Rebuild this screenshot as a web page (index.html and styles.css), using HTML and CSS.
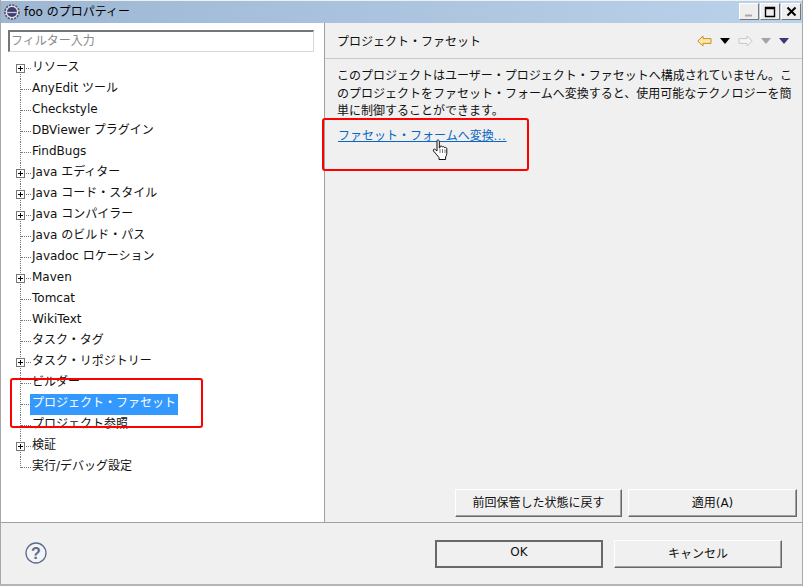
FILE: index.html
```html
<!DOCTYPE html>
<html lang="ja">
<head>
<meta charset="utf-8">
<title>foo のプロパティー</title>
<link rel="stylesheet" href="styles.css">
</head>
<body>
<div class="window">
  <header class="titlebar">
    <svg class="app-icon" width="16" height="16" viewBox="0 0 16 16"><circle cx="8" cy="8" r="7" fill="#e4e4e8" stroke="#55556a" stroke-width="1.6" stroke-dasharray="2.2 1.1"/><circle cx="8" cy="8" r="5" fill="#3f3d70"/><path d="M3.200 8.500h9.600" stroke="#c8c8dc" stroke-width="1.300"/></svg>
    <span class="title-text">foo のプロパティー</span>
    <div class="win-buttons">
      <div class="win-btn"><svg width="10" height="10" viewBox="0 0 10 10"><path d="M1 8.500h7" stroke="#a8a8a8" stroke-width="2"/></svg></div>
      <div class="win-btn"><svg width="12" height="12" viewBox="0 0 12 12"><path d="M1.500 1.500h9v9h-9z M1 2.500h10" fill="none" stroke="#000" stroke-width="1.400"/></svg></div>
      <div class="win-btn"><svg width="11" height="11" viewBox="0 0 11 11"><path d="M1.500 1.500l8 8M9.500 1.500l-8 8" stroke="#000" stroke-width="2"/></svg></div>
    </div>
  </header>
  <main class="main">
    <nav class="left">
      <div class="filter">フィルター入力</div>
      <ul class="tree">
        <li class="row has-box"><span class="box"></span>リソース</li>
        <li class="row">AnyEdit ツール</li>
        <li class="row">Checkstyle</li>
        <li class="row">DBViewer プラグイン</li>
        <li class="row">FindBugs</li>
        <li class="row has-box"><span class="box"></span>Java エディター</li>
        <li class="row has-box"><span class="box"></span>Java コード・スタイル</li>
        <li class="row has-box"><span class="box"></span>Java コンパイラー</li>
        <li class="row">Java のビルド・パス</li>
        <li class="row">Javadoc ロケーション</li>
        <li class="row has-box"><span class="box"></span>Maven</li>
        <li class="row">Tomcat</li>
        <li class="row">WikiText</li>
        <li class="row">タスク・タグ</li>
        <li class="row has-box"><span class="box"></span>タスク・リポジトリー</li>
        <li class="row">ビルダー</li>
        <li class="row"><span class="selected">プロジェクト・ファセット</span></li>
        <li class="row">プロジェクト参照</li>
        <li class="row has-box"><span class="box"></span>検証</li>
        <li class="row last">実行/デバッグ設定</li>
      </ul>
    </nav>
    <section class="right">
      <div class="right-head">
        <h1 class="right-title">プロジェクト・ファセット</h1>
        <div class="nav-icons">
          <svg width="15" height="12" viewBox="0 0 15 12"><path d="M.8 6L6 1v2.600h8v4.800H6V11z" fill="#fbe7a8" stroke="#c8921e"/></svg>
          <span class="tri black"></span>
          <svg width="15" height="12" viewBox="0 0 15 12"><path d="M14.200 6L9 1v2.600H1v4.800h8V11z" fill="#f4f4f4" stroke="#c8c8c8"/></svg>
          <span class="tri grey"></span>
          <span class="tri navy"></span>
        </div>
      </div>
      <div class="right-body">
        <p class="message">このプロジェクトはユーザー・プロジェクト・ファセットへ構成されていません。こ<br>のプロジェクトをファセット・フォームへ変換すると、使用可能なテクノロジーを簡<br>単に制御することができます。</p>
        <a class="link" href="#">ファセット・フォームへ変換<span class="dots">...</span></a>
      </div>
      <div class="right-actions">
        <button class="btn btn-restore">前回保管した状態に戻す</button>
        <button class="btn btn-apply">適用(A)</button>
      </div>
    </section>
  </main>
  <footer class="footer">
    <svg class="help" width="22" height="22" viewBox="0 0 22 22"><circle cx="11" cy="11" r="10" fill="#f4f4f6" stroke="#5a6b8c" stroke-width="1.300"/><text x="11" y="17" text-anchor="middle" class="help-q">?</text></svg>
    <div class="footer-buttons">
      <button class="btn btn-main btn-default">OK</button>
      <button class="btn btn-main">キャンセル</button>
    </div>
  </footer>
  <div class="mark mark-left"></div>
  <div class="mark mark-right"></div>
  <svg class="hand" width="18" height="22" viewBox="0 0 18 22"><path d="M5 1.500c1-1 2.300-.5 2.300 1V9l.7-.3V7.500c1-.8 2-.5 2.300.5.800-.7 2-.4 2.300.6.800-.5 2-.2 2.200 1v4.900c0 1.500-.7 2.500-1.200 3.500v2.500H7v-2C5.500 16.500 3 14 1.500 12c-.8-1.300.5-2.500 1.700-1.500L5 12z" fill="#fff" stroke="#111" stroke-width="1"/><path d="M8 10v4M10.500 10v4M13 10.500v3.500" stroke="#555" stroke-width=".8"/></svg>
</div>
</body>
</html>
```
FILE: styles.css
```css
* { box-sizing: border-box; }
html, body { margin: 0; padding: 0; }
body { width: 803px; height: 586px; overflow: hidden; background: #f0f0f0; font-family: "DejaVu Sans", "Noto Sans CJK JP", sans-serif; font-size: 12px; color: #111; }
.window { position: relative; width: 803px; height: 586px; display: flex; flex-direction: column; border-left: 1px solid #a8a8a8; border-right: 1px solid #a8a8a8; border-bottom: 2px solid #b4b4b4; }
.titlebar { height: 22px; margin-top: 1px; display: flex; align-items: center; padding-left: 3px; background: linear-gradient(90deg, #9db6d3, #bad2ea); flex: none; }
.app-icon { flex: none; margin-bottom: 1px; }
.title-text { margin-left: 4px; padding-bottom: 3px; color: #000; }
.win-buttons { margin-left: auto; display: flex; gap: 1px; align-self: flex-start; padding-right: 1px; margin-top: 2px; }
.win-btn { width: 20px; height: 17px; display: flex; align-items: center; justify-content: center; background: #eeeeee; border: 1px solid; border-color: #fff #777 #777 #fff; }
.main { flex: 1; display: flex; min-height: 0; border-bottom: 1px solid #a0a0a0; }
.left { width: 324px; background: #fff; border-right: 1px solid #a0a0a0; padding: 7px 10px 0 7px; flex: none; }
.filter { height: 22px; border: 1px solid; border-color: #767676 #d8d8d8 #d8d8d8 #767676; border-width: 2px 1px 1px 2px; padding-left: 1px; line-height: 18px; color: #8a8a8a; }
.tree { list-style: none; margin: 6px 0 0; padding: 0; }
.row { position: relative; height: 21px; line-height: 19px; padding-left: 24px; white-space: nowrap; }
.row::before { content: ""; position: absolute; left: 12px; top: 0; bottom: 0; border-left: 1px dotted #777; }
.row::after { content: ""; position: absolute; left: 13px; top: 10px; width: 10px; border-top: 1px dotted #777; }
.row:first-child::before { top: 10px; }
.row.last::before { bottom: 10px; }
.box { position: absolute; z-index: 1; left: 8px; top: 6px; width: 9px; height: 9px; border: 1px solid #777; background: linear-gradient(#000, #000) center / 5px 1px no-repeat, linear-gradient(#000, #000) center / 1px 5px no-repeat, #fff; }
.selected { display: inline-block; margin-left: -2px; padding: 0 2px 2px; height: 21px; background: #3399ff; color: #fff; }
.right { flex: 1; display: flex; flex-direction: column; min-width: 0; }
.right-head { height: 36px; display: flex; align-items: center; padding: 0 13px 0 12px; border-bottom: 1px solid #c8c8c8; flex: none; }
.right-title { margin: 0; font-size: 12px; font-weight: normal; }
.nav-icons { margin-left: auto; display: flex; align-items: center; gap: 8px; }
.tri { width: 0; height: 0; border-left: 5px solid transparent; border-right: 5px solid transparent; border-top: 6px solid #000; }
.tri.grey { border-top-color: #a4a4a4; }
.tri.navy { border-top-color: #3a3a78; }
.right-body { flex: 1; padding: 9px 0 0 12px; }
.message { margin: 0; line-height: 17.500px; white-space: nowrap; }
.link { display: inline-block; margin: 7px 0 0 1px; color: #0a66c2; line-height: 17px; }
.dots { font-family: "Liberation Sans", sans-serif; letter-spacing: 1px; }
.right-actions { display: flex; justify-content: flex-end; gap: 6px; padding: 0 5px 5px 0; flex: none; }
.btn { font: inherit; color: #111; background: #f0f0f0; border: 1px solid; border-color: #fff #696969 #696969 #fff; box-shadow: inset -1px -1px 0 #a0a0a0; padding: 0 0 3px; }
.btn-restore { width: 167px; height: 28px; }
.btn-apply { width: 169px; height: 28px; }
.footer { height: 61px; display: flex; align-items: center; padding: 0 20px 0 24px; flex: none; }
.help { flex: none; margin-bottom: 1px; }
.help-q { font-family: "Liberation Sans", sans-serif; font-size: 16px; font-weight: bold; fill: #5a6b8c; }
.footer-buttons { margin-left: auto; display: flex; gap: 11px; }
.btn-main { width: 168px; height: 28px; }
.btn-default { border-color: #696969; border-width: 2px; box-shadow: none; }
.mark { position: absolute; border: 2px solid #f00; border-radius: 3px; pointer-events: none; }
.mark-left { left: 9px; top: 378px; width: 193px; height: 50px; }
.mark-right { left: 321px; top: 118px; width: 207px; height: 53px; }
.hand { position: absolute; left: 431px; top: 139px; }
```
